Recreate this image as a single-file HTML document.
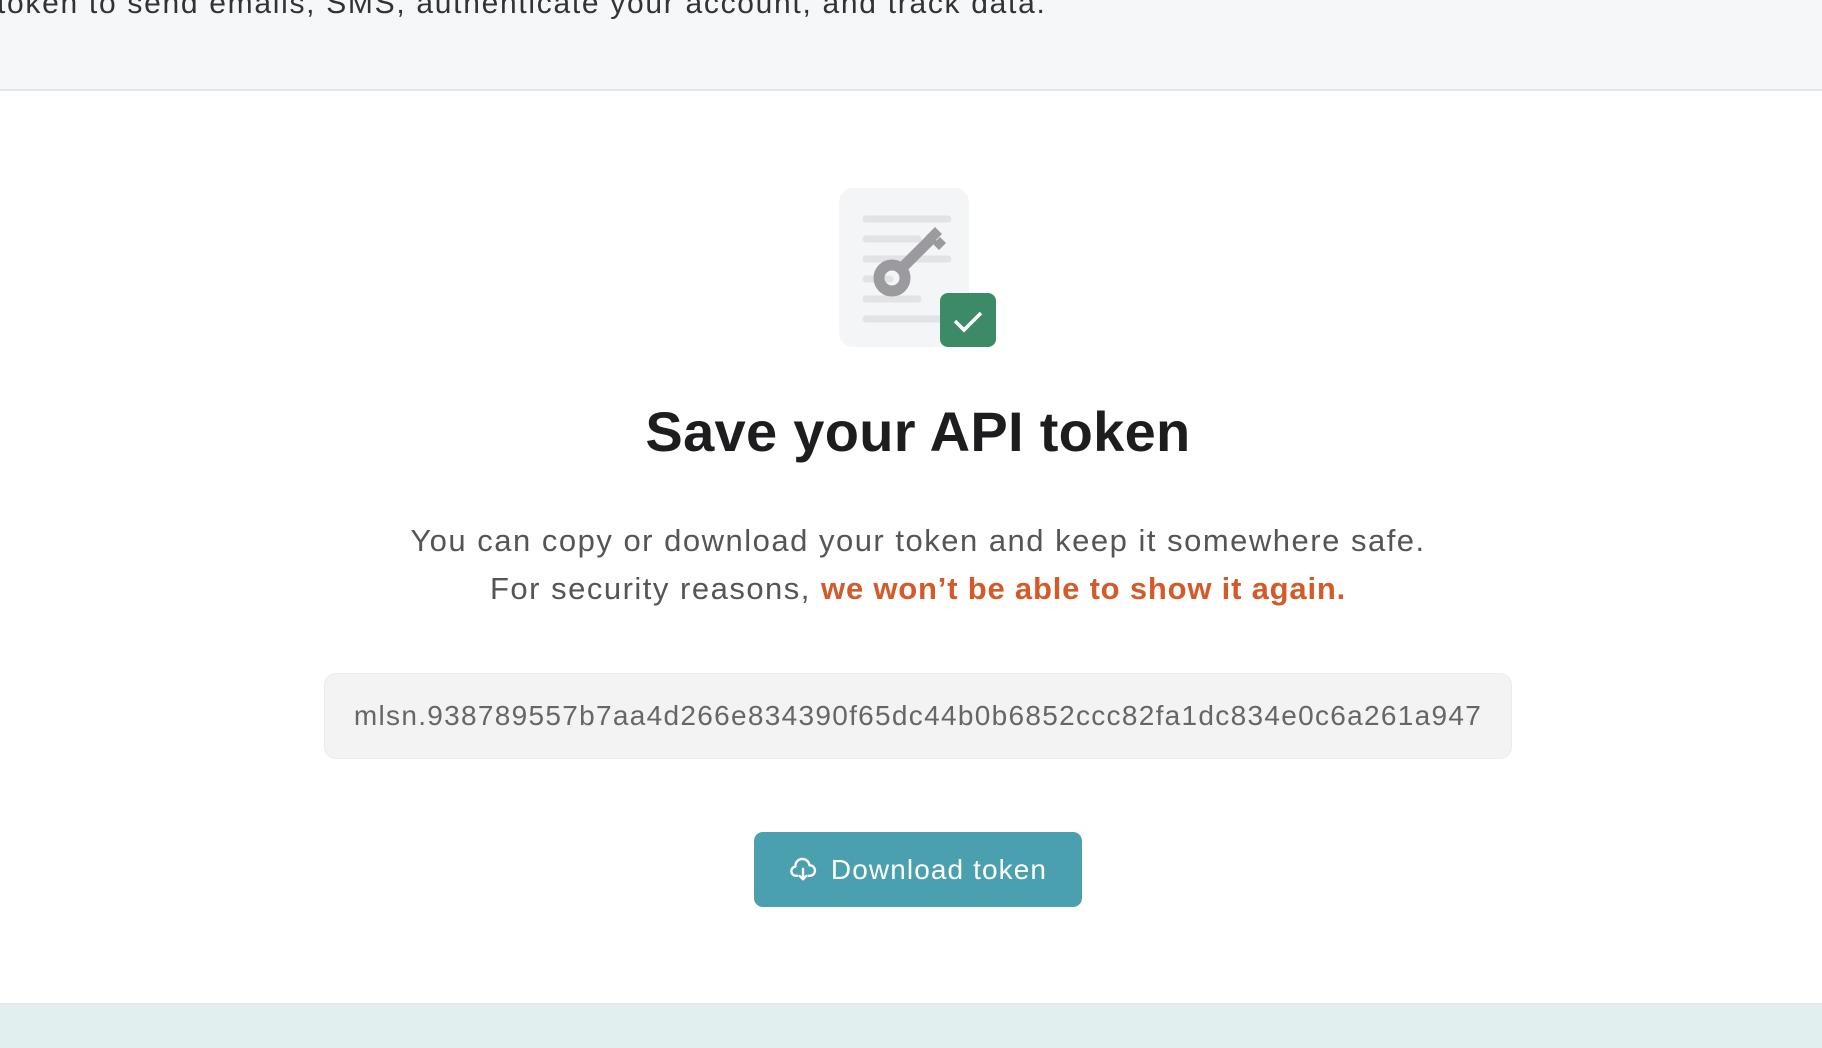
<!DOCTYPE html>
<html><head><meta charset="utf-8"><style>
*{margin:0;padding:0;box-sizing:border-box}
body{width:1822px;height:1048px;overflow:hidden;background:#fff;font-family:"Liberation Sans",sans-serif;position:relative}
.top{position:absolute;left:0;top:0;width:1822px;height:91px;background:#f6f7f9;border-bottom:2px solid #e3e5e8}
.top p{position:absolute;left:-3px;top:-13px;font-size:30px;letter-spacing:1.7px;color:#333;white-space:nowrap}
.c{position:absolute;left:218px;width:1400px;text-align:center}
h1{font-size:56px;font-weight:bold;color:#1d1d1f;letter-spacing:0.3px}
.p{font-size:31px;color:#555;line-height:48px;letter-spacing:1.5px}
.p b{color:#d45a2a;letter-spacing:0.8px}
.tok{position:absolute;left:324px;top:673px;width:1188px;height:86px;background:#f3f3f3;border:1px solid #ececec;border-radius:12px;font-size:28px;color:#666;line-height:84px;text-align:center;letter-spacing:1.3px;white-space:nowrap}
.btn{position:absolute;left:754px;top:832px;width:328px;height:75px;background:#4aa0ae;border-radius:9px;color:#fff;font-size:28px;letter-spacing:1.1px;display:flex;align-items:center;justify-content:center;gap:14px}
.bot{position:absolute;left:0;top:1003px;width:1822px;height:45px;background:#e2efef;border-top:2px solid #e6e8ea}
</style></head><body>
<div class="top"><p>token to send emails, SMS, authenticate your account, and track data.</p></div>
<svg style="position:absolute;left:830px;top:180px" width="180" height="180" viewBox="0 0 180 180">
<rect x="9" y="8" width="130" height="159" rx="14" fill="#f4f5f7"/>
<g stroke="#e2e3e5" stroke-width="7" stroke-linecap="round">
<line x1="36" y1="39" x2="118" y2="39"/><line x1="36" y1="59" x2="88" y2="59"/><line x1="36" y1="79" x2="118" y2="79"/><line x1="36" y1="99" x2="60" y2="99"/><line x1="36" y1="119" x2="88" y2="119"/><line x1="36" y1="139" x2="118" y2="139"/></g>
<g stroke="#9a9a9f" stroke-width="11" fill="none"><circle cx="62" cy="98" r="13"/><line x1="72" y1="88" x2="103" y2="57"/></g>
<path d="M96 56 L105 47 L112 54 L103 63Z M103 64 L110 57 L116 63 L109 70Z" fill="#9a9a9f"/>
<rect x="110" y="113" width="56" height="54" rx="8" fill="#3c8a66"/>
<path d="M125 141 L134 150 L151 133" stroke="#fff" stroke-width="3.5" fill="none"/>
</svg>
<div class="c" style="top:399px"><h1>Save your API token</h1></div>
<div class="c p" style="top:517px">You can copy or download your token and keep it somewhere safe.<br>For security reasons, <b>we won’t be able to show it again.</b></div>
<div class="tok">mlsn.938789557b7aa4d266e834390f65dc44b0b6852ccc82fa1dc834e0c6a261a947</div>
<div class="btn"><svg width="28" height="28" viewBox="0 0 24 24" fill="none" stroke="#fff" stroke-width="2" stroke-linecap="round" stroke-linejoin="round"><path d="M7 17H6a4 4 0 0 1-.5-7.97A6 6 0 0 1 17.5 8 4.5 4.5 0 0 1 18 17h-1"/><path d="M12 11v9M9 17l3 3 3-3"/></svg><span>Download token</span></div>
<div class="bot"></div>
</body></html>
